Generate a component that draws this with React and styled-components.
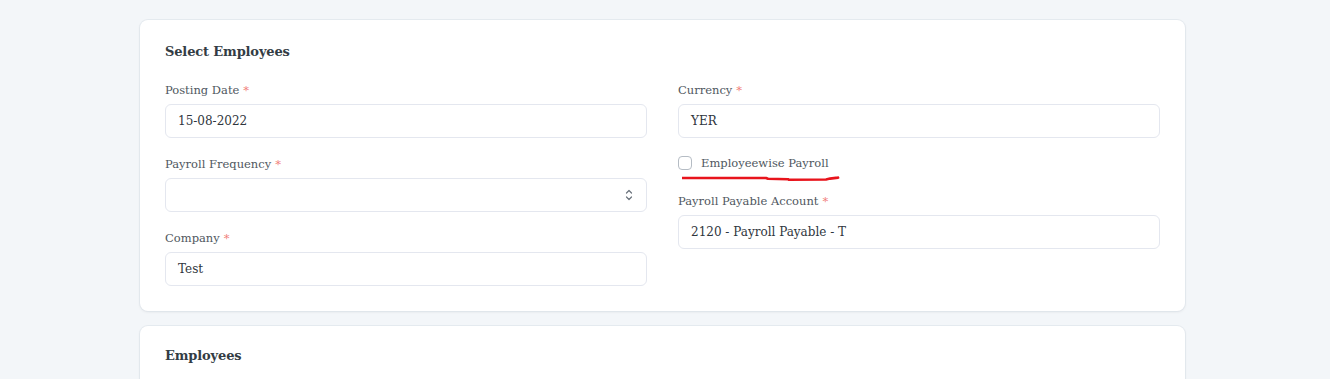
import React from "react";
import styled, { createGlobalStyle } from "styled-components";

const Global = createGlobalStyle`
  html, body { margin: 0; padding: 0; background: #f3f6f9; }
  body { font-family: "DejaVu Serif", serif; color: #333c44; }
  * { box-sizing: border-box; }
`;

const Page = styled.div`
  width: 1330px;
  padding: 20px 145px 0 140px;
  display: flex;
  flex-direction: column;
  gap: 15px;
`;

const Card = styled.section`
  background: #fff;
  border-radius: 8px;
  box-shadow: 0 0 0 1px rgba(220, 226, 234, 0.6), 0 1px 3px rgba(0, 0, 0, 0.08);
  padding: ${(p) => p.$pt || 23}px 25px 25px;
  height: ${(p) => (p.$h ? p.$h + "px" : "auto")};
`;

const Title = styled.h3`
  margin: 0 0 21px;
  font-size: 13px;
  letter-spacing: -0.15px;
  font-weight: 700;
  line-height: 18px;
  color: #333c44;
`;

const Grid = styled.div`
  display: grid;
  grid-template-columns: 1fr 1fr;
  column-gap: 31px;
`;

const Column = styled.div`
  display: flex;
  flex-direction: column;
  gap: 18px;
  position: relative;
`;

const Field = styled.div`
  display: flex;
  flex-direction: column;
  gap: 6px;
`;

const Label = styled.label`
  font-size: 11.5px;
  line-height: 16px;
  color: #4f5760;
`;

const Req = styled.span`
  color: #f1807a;
  margin-left: 4px;
`;

const Control = styled.div`
  height: 34px;
  border: 1px solid #e4e7ef;
  border-radius: 6px;
  background: #fff;
  padding: 0 12px;
  display: flex;
  align-items: center;
  justify-content: space-between;
  font-size: 12px;
  color: #2f363d;
`;

const CheckRow = styled.label`
  display: flex;
  align-items: center;
  gap: 9px;
  height: 16px;
  margin: -1px 0 4px;
  font-size: 11.5px;
  color: #4f5760;
  position: relative;
`;

const Box = styled.span`
  width: 14px;
  height: 14px;
  border: 1px solid #b5bcc4;
  border-radius: 4px;
  background: #fff;
`;

const Scribble = styled.svg`
  position: absolute;
  left: 4px;
  top: 20px;
  overflow: visible;
`;

const F = ({ label, value, children }) => (
  <Field>
    <Label>
      {label}
      <Req>*</Req>
    </Label>
    <Control>
      <span>{value}</span>
      {children}
    </Control>
  </Field>
);

export default function App() {
  return (
    <>
      <Global />
      <Page>
        <Card>
          <Title>Select Employees</Title>
          <Grid>
            <Column>
              <F label="Posting Date" value="15-08-2022" />
              <F label="Payroll Frequency" value="">
                <svg width="10" height="14" viewBox="0 0 10 14" fill="none" stroke="#6b737c" strokeWidth="1.2" strokeLinecap="round" strokeLinejoin="round">
                  <path d="M2.5 5 L5 2.5 L7.5 5" />
                  <path d="M2.5 9 L5 11.5 L7.5 9" />
                </svg>
              </F>
              <F label="Company" value="Test" />
            </Column>
            <Column>
              <F label="Currency" value="YER" />
              <CheckRow>
                <Box />
                Employeewise Payroll
                <Scribble width="160" height="10" viewBox="0 0 160 10">
                  <path d="M0 3 L84 3 L86 3.8 L106 4.2 L107 4.8 L144 4.5 L148 3.6 L156 2.6 L157 2" fill="none" stroke="#e8141c" strokeWidth="2.6" strokeLinecap="butt" strokeLinejoin="round" />
                </Scribble>
              </CheckRow>
              <F label="Payroll Payable Account" value="2120 - Payroll Payable - T" />
            </Column>
          </Grid>
        </Card>
        <Card $h={70} $pt={21}>
          <Title>Employees</Title>
        </Card>
      </Page>
    </>
  );
}
